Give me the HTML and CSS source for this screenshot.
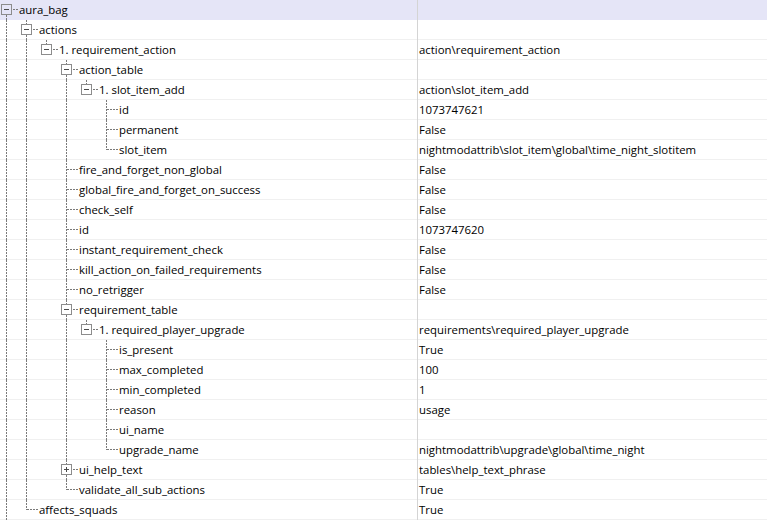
FILE: index.html
```html
<!DOCTYPE html>
<html>
<head>
<meta charset="utf-8">
<link rel="stylesheet" href="styles.css">
</head>
<body>
<div class="tree">
  <div class="row sel">
    <div class="name"><span class="g f"><span class="box minus"></span></span><span class="label">aura_bag</span></div>
    <div class="val"></div>
  </div>
  <div class="row">
    <div class="name"><span class="g v"></span><span class="g t"><span class="box minus"></span></span><span class="label">actions</span></div>
    <div class="val"></div>
  </div>
  <div class="row">
    <div class="name"><span class="g v"></span><span class="g v"></span><span class="g l"><span class="box minus"></span></span><span class="label">1. requirement_action</span></div>
    <div class="val">action\requirement_action</div>
  </div>
  <div class="row">
    <div class="name"><span class="g v"></span><span class="g v"></span><span class="g e"></span><span class="g t"><span class="box minus"></span></span><span class="label">action_table</span></div>
    <div class="val"></div>
  </div>
  <div class="row">
    <div class="name"><span class="g v"></span><span class="g v"></span><span class="g e"></span><span class="g v"></span><span class="g l"><span class="box minus"></span></span><span class="label">1. slot_item_add</span></div>
    <div class="val">action\slot_item_add</div>
  </div>
  <div class="row">
    <div class="name"><span class="g v"></span><span class="g v"></span><span class="g e"></span><span class="g v"></span><span class="g e"></span><span class="g t"></span><span class="label">id</span></div>
    <div class="val">1073747621</div>
  </div>
  <div class="row">
    <div class="name"><span class="g v"></span><span class="g v"></span><span class="g e"></span><span class="g v"></span><span class="g e"></span><span class="g t"></span><span class="label">permanent</span></div>
    <div class="val">False</div>
  </div>
  <div class="row">
    <div class="name"><span class="g v"></span><span class="g v"></span><span class="g e"></span><span class="g v"></span><span class="g e"></span><span class="g l"></span><span class="label">slot_item</span></div>
    <div class="val">nightmodattrib\slot_item\global\time_night_slotitem</div>
  </div>
  <div class="row">
    <div class="name"><span class="g v"></span><span class="g v"></span><span class="g e"></span><span class="g t"></span><span class="label">fire_and_forget_non_global</span></div>
    <div class="val">False</div>
  </div>
  <div class="row">
    <div class="name"><span class="g v"></span><span class="g v"></span><span class="g e"></span><span class="g t"></span><span class="label">global_fire_and_forget_on_success</span></div>
    <div class="val">False</div>
  </div>
  <div class="row">
    <div class="name"><span class="g v"></span><span class="g v"></span><span class="g e"></span><span class="g t"></span><span class="label">check_self</span></div>
    <div class="val">False</div>
  </div>
  <div class="row">
    <div class="name"><span class="g v"></span><span class="g v"></span><span class="g e"></span><span class="g t"></span><span class="label">id</span></div>
    <div class="val">1073747620</div>
  </div>
  <div class="row">
    <div class="name"><span class="g v"></span><span class="g v"></span><span class="g e"></span><span class="g t"></span><span class="label">instant_requirement_check</span></div>
    <div class="val">False</div>
  </div>
  <div class="row">
    <div class="name"><span class="g v"></span><span class="g v"></span><span class="g e"></span><span class="g t"></span><span class="label">kill_action_on_failed_requirements</span></div>
    <div class="val">False</div>
  </div>
  <div class="row">
    <div class="name"><span class="g v"></span><span class="g v"></span><span class="g e"></span><span class="g t"></span><span class="label">no_retrigger</span></div>
    <div class="val">False</div>
  </div>
  <div class="row">
    <div class="name"><span class="g v"></span><span class="g v"></span><span class="g e"></span><span class="g t"><span class="box minus"></span></span><span class="label">requirement_table</span></div>
    <div class="val"></div>
  </div>
  <div class="row">
    <div class="name"><span class="g v"></span><span class="g v"></span><span class="g e"></span><span class="g v"></span><span class="g l"><span class="box minus"></span></span><span class="label">1. required_player_upgrade</span></div>
    <div class="val">requirements\required_player_upgrade</div>
  </div>
  <div class="row">
    <div class="name"><span class="g v"></span><span class="g v"></span><span class="g e"></span><span class="g v"></span><span class="g e"></span><span class="g t"></span><span class="label">is_present</span></div>
    <div class="val">True</div>
  </div>
  <div class="row">
    <div class="name"><span class="g v"></span><span class="g v"></span><span class="g e"></span><span class="g v"></span><span class="g e"></span><span class="g t"></span><span class="label">max_completed</span></div>
    <div class="val">100</div>
  </div>
  <div class="row">
    <div class="name"><span class="g v"></span><span class="g v"></span><span class="g e"></span><span class="g v"></span><span class="g e"></span><span class="g t"></span><span class="label">min_completed</span></div>
    <div class="val">1</div>
  </div>
  <div class="row">
    <div class="name"><span class="g v"></span><span class="g v"></span><span class="g e"></span><span class="g v"></span><span class="g e"></span><span class="g t"></span><span class="label">reason</span></div>
    <div class="val">usage</div>
  </div>
  <div class="row">
    <div class="name"><span class="g v"></span><span class="g v"></span><span class="g e"></span><span class="g v"></span><span class="g e"></span><span class="g t"></span><span class="label">ui_name</span></div>
    <div class="val"></div>
  </div>
  <div class="row">
    <div class="name"><span class="g v"></span><span class="g v"></span><span class="g e"></span><span class="g v"></span><span class="g e"></span><span class="g l"></span><span class="label">upgrade_name</span></div>
    <div class="val">nightmodattrib\upgrade\global\time_night</div>
  </div>
  <div class="row">
    <div class="name"><span class="g v"></span><span class="g v"></span><span class="g e"></span><span class="g t"><span class="box plus"></span></span><span class="label">ui_help_text</span></div>
    <div class="val">tables\help_text_phrase</div>
  </div>
  <div class="row">
    <div class="name"><span class="g v"></span><span class="g v"></span><span class="g e"></span><span class="g l"></span><span class="label">validate_all_sub_actions</span></div>
    <div class="val">True</div>
  </div>
  <div class="row">
    <div class="name"><span class="g v"></span><span class="g l"></span><span class="label">affects_squads</span></div>
    <div class="val">True</div>
  </div>
</div>
</body>
</html>
```

FILE: styles.css
```css
html, body {
  margin: 0;
  padding: 0;
  background: #fff;
}
body {
  font-family: "Open Sans", "Noto Sans", sans-serif;
  font-size: 11.4px;
  color: #000;
  width: 767px;
  height: 520px;
  overflow: hidden;
  --dv: repeating-linear-gradient(to bottom, #7a7a7a 0 2px, transparent 2px 3px);
  --dh: repeating-linear-gradient(to right, #7a7a7a 0 2px, transparent 2px 3px);
}
.tree {
  display: flex;
  flex-direction: column;
}
.row {
  --bg: #fff;
  --sepc: #f0f0f0;
  display: flex;
  height: 20px;
  line-height: 19px;
  background: var(--bg);
}
.row.sel {
  --bg: #e5e5f7;
  --sepc: #e5e5f7;
}
.name {
  width: 417px;
  flex: none;
  display: flex;
  white-space: nowrap;
  overflow: hidden;
  background: linear-gradient(var(--sepc), var(--sepc)) left bottom / 100% 1px no-repeat;
}
.val {
  flex: 1;
  border-left: 1px solid #d4d4d4;
  padding-left: 1px;
  white-space: nowrap;
  background: linear-gradient(var(--sepc), var(--sepc)) left bottom / 100% 1px no-repeat;
}
.g {
  display: block;
  width: 20px;
  height: 20px;
  flex: none;
  background-repeat: no-repeat;
}
.v {
  background-image: var(--dv);
  background-size: 1px 20px;
  background-position: 6px 0;
}
.t {
  background-image: var(--dv), var(--dh);
  background-size: 1px 20px, 12px 1px;
  background-position: 6px 0, 7px 9px;
}
.l {
  background-image: var(--dv), var(--dh);
  background-size: 1px 10px, 12px 1px;
  background-position: 6px 0, 7px 9px;
}
.f {
  background-image: var(--dv), var(--dh);
  background-size: 1px 11px, 12px 1px;
  background-position: 6px 9px, 7px 9px;
}
.box {
  display: block;
  box-sizing: border-box;
  width: 11px;
  height: 11px;
  margin: 4px 0 0 1px;
  border: 1px solid #8c8c8c;
}
.box.minus {
  background: linear-gradient(#4a4a4a, #4a4a4a) center / 5px 1px no-repeat, var(--bg);
}
.box.plus {
  background: linear-gradient(#4a4a4a, #4a4a4a) center / 5px 1px no-repeat,
              linear-gradient(#4a4a4a, #4a4a4a) center / 1px 5px no-repeat, var(--bg);
}
.label {
  margin-left: -1px;
}
```
